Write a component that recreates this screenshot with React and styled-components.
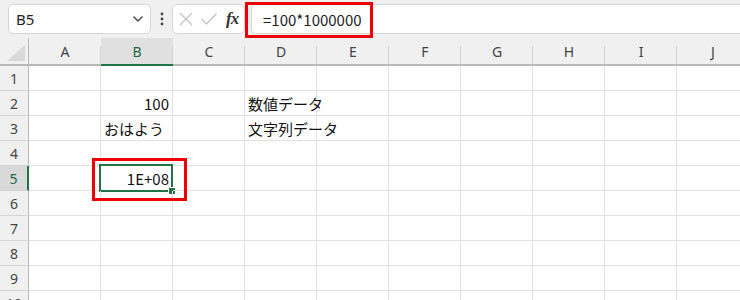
import React from "react";
import styled, { createGlobalStyle } from "styled-components";

const Global = createGlobalStyle`
  html, body { margin: 0; padding: 0; background: #ffffff; }
  body { font-family: "Noto Sans CJK JP", "Noto Sans", sans-serif; overflow: hidden; }
  * { box-sizing: border-box; }
`;

const Page = styled.div`
  width: 740px;
  height: 300px;
  overflow: hidden;
  position: relative;
  background: #fff;
`;

const Toolbar = styled.div`
  height: 38px;
  background: #f0f0f0;
  display: flex;
  align-items: flex-start;
  padding: 4px 0 0 8px;
`;

const NameBox = styled.div`
  width: 143px;
  height: 30px;
  background: #fff;
  border: 1px solid #d6d6d6;
  border-radius: 5px;
  display: flex;
  align-items: center;
  justify-content: space-between;
  padding: 0 6px 0 7px;
  font-family: "Noto Sans", sans-serif;
  font-size: 15px;
  color: #222;
`;

const Dots = styled.div`
  width: 21px;
  height: 30px;
  display: flex;
  align-items: center;
  justify-content: center;
`;

const FxBox = styled.div`
  width: 73px;
  height: 30px;
  background: #fff;
  border: 1px solid #d6d6d6;
  border-radius: 5px;
  display: flex;
  align-items: center;
  padding: 0 4px 0 5px;
  gap: 6px;
`;

const Fx = styled.span`
  font-family: "Liberation Serif", serif;
  font-style: italic;
  font-size: 17px;
  font-weight: bold;
  color: #333;
  margin-left: 2px;
  letter-spacing: -1px;
`;

const FormulaInput = styled.div`
  flex: 1;
  height: 30px;
  margin-left: 6px;
  background: #fff;
  border: 1px solid #d6d6d6;
  border-right: none;
  border-radius: 5px 0 0 5px;
  display: flex;
  align-items: center;
  padding-left: 11px;
  font-family: "Noto Sans CJK JP", sans-serif;
  font-size: 15px;
  color: #222;
`;

const Grid = styled.div`
  display: grid;
  grid-template-columns: 29px repeat(10, 72px);
  grid-template-rows: 28px;
  grid-auto-rows: 25px;
`;

const Corner = styled.div`
  background: #f0f0f0;
  border-right: 1px solid #b8b8b8;
  border-bottom: 2px solid #b8b8b8;
  display: flex;
  align-items: flex-end;
  justify-content: flex-end;
  padding: 0 3px 3px 0;
`;

const ColHead = styled.div`
  background: ${(p) => (p.$active ? "#e0e0e0" : "#f0f0f0")};
  border-bottom: 2px solid ${(p) => (p.$active ? "#217346" : "#b8b8b8")};
  display: flex;
  align-items: flex-end;
  justify-content: center;
  padding-bottom: 3px;
  font-family: "Noto Sans", sans-serif;
  font-size: 14px;
  color: ${(p) => (p.$active ? "#1d6b40" : "#444")};
  position: relative;
  &::after {
    content: "";
    position: absolute;
    right: 0;
    top: 8px;
    bottom: 0;
    width: 1px;
    background: #d4d4d4;
  }
`;

const RowHead = styled.div`
  background: ${(p) => (p.$active ? "#d9d9d9" : "#f0f0f0")};
  border-right: ${(p) => (p.$active ? "2px solid #217346" : "1px solid #b8b8b8")};
  border-bottom: 1px solid #d4d4d4;
  display: flex;
  align-items: center;
  justify-content: center;
  font-family: "Noto Sans", sans-serif;
  font-size: 14px;
  color: ${(p) => (p.$active ? "#1d6b40" : "#444")};
`;

const Cell = styled.div`
  border-right: 1px solid #e1e1e1;
  border-bottom: 1px solid #e1e1e1;
  display: flex;
  align-items: center;
  justify-content: ${(p) => (p.$right ? "flex-end" : "flex-start")};
  padding: 0 ${(p) => (p.$right ? "3px" : "0")} 0 3px;
  font-size: 15px;
  color: #111;
  white-space: nowrap;
  position: relative;
`;

const Selection = styled.div`
  position: absolute;
  left: -2px;
  top: -2px;
  right: -1px;
  bottom: -2px;
  border: 2px solid #217346;
  pointer-events: none;
  &::after {
    content: "";
    position: absolute;
    right: -4px;
    bottom: -4px;
    width: 6px;
    height: 6px;
    background: #217346;
    box-shadow: 0 0 0 1px #fff;
  }
`;

const CellText = styled.span`
  position: relative;
  z-index: 1;
`;

const Mark = styled.div`
  position: absolute;
  border: 3px solid #ee0000;
  pointer-events: none;
`;

const cols = ["A", "B", "C", "D", "E", "F", "G", "H", "I", "J"];

const data = {
  "2-B": { v: "100", right: true },
  "2-D": { v: "数値データ" },
  "3-B": { v: "おはよう" },
  "3-D": { v: "文字列データ" },
  "5-B": { v: "1E+08", right: true, sel: true },
};

export default function App() {
  const rows = [1, 2, 3, 4, 5, 6, 7, 8, 9, 10];
  return (
    <Page>
      <Global />
      <Toolbar>
        <NameBox>
          <span>B5</span>
          <svg width="12" height="8" viewBox="0 0 12 8">
            <path d="M1.5 1.5 L6 6 L10.5 1.5" fill="none" stroke="#444" strokeWidth="1.4" />
          </svg>
        </NameBox>
        <Dots>
          <svg width="4" height="14" viewBox="0 0 4 14">
            <circle cx="2" cy="2" r="1.4" fill="#444" />
            <circle cx="2" cy="7" r="1.4" fill="#444" />
            <circle cx="2" cy="12" r="1.4" fill="#444" />
          </svg>
        </Dots>
        <FxBox>
          <svg width="16" height="16" viewBox="0 0 16 16">
            <path d="M2 2 L14 14 M14 2 L2 14" stroke="#c4c4c4" strokeWidth="1.3" fill="none" />
          </svg>
          <svg width="18" height="16" viewBox="0 0 18 16">
            <path d="M1.5 8 L6.5 13 L16.5 2.5" stroke="#c4c4c4" strokeWidth="1.3" fill="none" />
          </svg>
          <Fx>fx</Fx>
        </FxBox>
        <FormulaInput>=100*1000000</FormulaInput>
      </Toolbar>
      <Grid>
        <Corner>
          <svg width="18" height="16" viewBox="0 0 18 16">
            <polygon points="18,0 18,16 0,16" fill="#d9d9d9" />
          </svg>
        </Corner>
        {cols.map((c) => (
          <ColHead key={c} $active={c === "B"}>
            {c}
          </ColHead>
        ))}
        {rows.map((r) => (
          <React.Fragment key={r}>
            <RowHead $active={r === 5}>{r}</RowHead>
            {cols.map((c) => {
              const d = data[`${r}-${c}`];
              return (
                <Cell key={c} $right={d && d.right}>
                  {d && d.sel && <Selection />}
                  {d && <CellText>{d.v}</CellText>}
                </Cell>
              );
            })}
          </React.Fragment>
        ))}
      </Grid>
      <Mark style={{ left: 92, top: 158, width: 95, height: 43 }} />
      <Mark style={{ left: 245, top: 2, width: 128, height: 36 }} />
    </Page>
  );
}
